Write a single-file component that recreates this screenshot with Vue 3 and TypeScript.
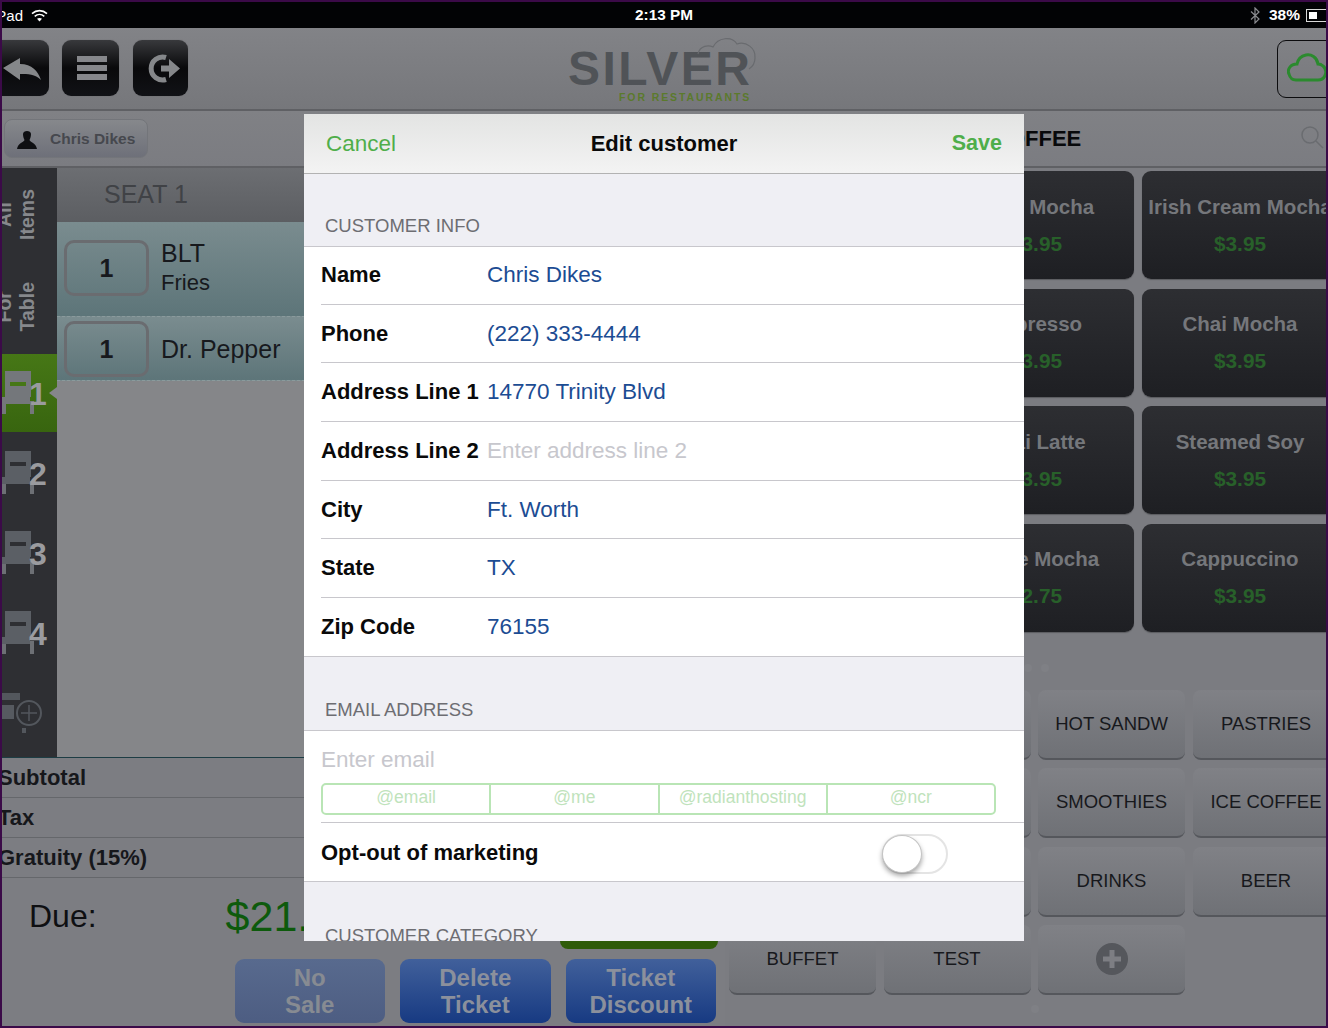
<script setup lang="ts">
const customerRows = [
  { label: 'Name', value: 'Chris Dikes' },
  { label: 'Phone', value: '(222) 333-4444' },
  { label: 'Address Line 1', value: '14770 Trinity Blvd' },
  { label: 'Address Line 2', value: '', placeholder: 'Enter address line 2' },
  { label: 'City', value: 'Ft. Worth' },
  { label: 'State', value: 'TX' },
  { label: 'Zip Code', value: '76155' }
]
const domains = ['@email', '@me', '@radianthosting', '@ncr']

const tiles = [
  { name: 'Dark Mocha', price: '$3.95' },
  { name: 'Irish Cream Mocha', price: '$3.95' },
  { name: 'Espresso', price: '$3.95' },
  { name: 'Chai Mocha', price: '$3.95' },
  { name: 'Chai Latte', price: '$3.95' },
  { name: 'Steamed Soy', price: '$3.95' },
  { name: 'White Mocha', price: '$2.75' },
  { name: 'Cappuccino', price: '$3.95' }
]
const categories = ['', '', 'HOT SANDW', 'PASTRIES', '', '', 'SMOOTHIES', 'ICE COFFEE', '', '', 'DRINKS', 'BEER', 'BUFFET', 'TEST', '+']
const seats = [1, 2, 3, 4]
const totals = ['Subtotal', 'Tax', 'Gratuity (15%)']
</script>

<template>
  <div class="screen">
    <div class="status-bar">
      <div class="status-left">
        <span class="carrier">iPad</span>
        <svg width="17" height="13" viewBox="0 0 17 13" fill="none" stroke="#fff" stroke-width="1.6">
          <path d="M1 4.6C5.5 .6 11.500 .6 16 4.6" />
          <path d="M3.700 7.300C6.500 4.900 10.500 4.900 13.300 7.300" />
          <path d="M8.500 12.500L6 9.700C7.500 8.600 9.500 8.600 11 9.700Z" fill="#fff" stroke="none" />
        </svg>
      </div>
      <span class="clock">2:13 PM</span>
      <div class="status-right">
        <svg width="10" height="17" viewBox="0 0 10 17" fill="none" stroke="#8a8b8f" stroke-width="1.200">
          <path d="M1 4.500L9 12L5 16V1L9 5L1 12.500" />
        </svg>
        <span class="battery-text">38%</span>
        <span class="battery"><i></i></span>
      </div>
    </div>

    <div class="toolbar">
      <div class="toolbar-left">
        <button class="tool back">
          <svg width="47" height="55" viewBox="0 0 47 55" fill="#85878a">
            <path d="M1 27L18 17V23C30 23 36 30 39 39C33 33 26 33 18 33V39Z" />
          </svg>
        </button>
        <button class="tool menu">
          <span></span><span></span><span></span>
        </button>
        <button class="tool out">
          <svg width="55" height="55" viewBox="0 0 55 55">
            <path d="M33 16.500A11.500 11.500 0 1 0 33 38.500" fill="none" stroke="#85878a" stroke-width="5" />
            <path d="M28 24.500H36V18L47 27.500L36 37V30.500H28Z" fill="#85878a" />
          </svg>
        </button>
      </div>
      <div class="logo">
        <svg class="logo-cloud" width="62" height="36" viewBox="0 0 62 36" fill="none" stroke="#696b6f" stroke-width="1.200">
          <path d="M2 18C4 9 13 9 17 11C22 1 36 0 41 8C50 5 60 12 59 22C59 27 56 31 53 33" />
        </svg>
        <span class="logo-name">SILVER</span>
        <span class="logo-sub">FOR RESTAURANTS</span>
      </div>
      <div class="toolbar-right">
        <button class="cloud-btn">
          <svg width="49" height="32" viewBox="0 0 49 32" fill="none" stroke="#2b8a2e" stroke-width="3">
            <path d="M9 27H31C39 27 41 17 36 13C34 11 32 11 31 11C30 4 24 1 19 2C14 3 11 6 10 11C3 11 0 17 2 21C3 25 6 27 9 27Z" />
          </svg>
        </button>
      </div>
    </div>

    <div class="subbar">
      <button class="customer-btn">
        <svg width="20" height="20" viewBox="0 0 20 20" fill="#0e0f12">
          <path d="M6 5C6 1 14 1 14 5C14 8 13 10 12.500 11C13 13 19 14 20 20H0C1 14 7 13 7.500 11C7 10 6 8 6 5Z" />
        </svg>
        <span>Chris Dikes</span>
      </button>
      <span class="menu-title">COFFEE</span>
      <svg class="search" width="24" height="24" viewBox="0 0 24 24" fill="none" stroke="#6a6c70" stroke-width="1.500">
        <circle cx="10" cy="10" r="8" />
        <path d="M16 16L23 23" />
      </svg>
    </div>

    <div class="main">
      <div class="left-panel">
        <div class="order-area">
          <div class="sidebar">
            <div class="side-text"><span>All<br />Items</span></div>
            <div class="side-text"><span>For<br />Table</span></div>
            <div v-for="seat in seats" :key="seat" class="seat" :class="{ active: seat === 1 }">
              <svg width="34" height="44" viewBox="0 0 34 44">
                <rect x="3" y="0" width="26" height="26" class="chair" />
                <rect x="8" y="11" width="16" height="4" class="slot" />
                <rect x="0" y="26" width="28" height="7" class="chair" />
                <rect x="0" y="33" width="4" height="10" class="leg" />
                <rect x="28" y="30" width="4" height="13" class="leg" />
              </svg>
              <span class="seat-no">{{ seat }}</span>
            </div>
            <div class="seat add-seat">
              <svg width="46" height="40" viewBox="0 0 46 40" fill="none" stroke="#53575d">
                <rect x="0" y="0" width="18" height="7" fill="#53575d" stroke="none" />
                <rect x="0" y="12" width="12" height="14" fill="#565a60" stroke="none" />
                <circle cx="27" cy="20" r="12" stroke-width="2" />
                <path d="M27 12V28M19 20H35" stroke-width="1.500" />
                <rect x="20" y="35" width="4" height="5" fill="#53575d" stroke="none" />
              </svg>
            </div>
          </div>
          <div class="order-list">
            <div class="seat-head">SEAT 1</div>
            <div class="order-row first">
              <div class="qty">1</div>
              <div class="order-name">
                <div>BLT</div>
                <div class="side-dish">Fries</div>
              </div>
            </div>
            <div class="order-row">
              <div class="qty">1</div>
              <div class="order-name">Dr. Pepper</div>
            </div>
          </div>
        </div>
        <div v-for="total in totals" :key="total" class="total-row">{{ total }}</div>
        <div class="due-row">
          <span class="due-label">Due:</span>
          <span class="due-amount">$21.</span>
          <span class="pay-btn"></span>
        </div>
        <div class="actions">
          <button class="action disabled">No<br />Sale</button>
          <button class="action">Delete<br />Ticket</button>
          <button class="action">Ticket<br />Discount</button>
        </div>
      </div>

      <div class="right-panel">
        <div class="tiles">
          <div v-for="tile in tiles" :key="tile.name" class="tile">
            <div class="tile-name">{{ tile.name }}</div>
            <div class="tile-price">{{ tile.price }}</div>
          </div>
        </div>
        <div class="categories">
          <div v-for="(cat, i) in categories" :key="i" class="category">
            <span v-if="cat === '+'" class="plus">
              <svg width="34" height="34" viewBox="0 0 34 34">
                <circle cx="17" cy="17" r="16" fill="#55575c" />
                <path d="M17 8V26M8 17H26" stroke="#7d7e83" stroke-width="5" />
              </svg>
            </span>
            <template v-else>{{ cat }}</template>
          </div>
        </div>
      </div>
    </div>

    <i class="dot" style="left: 1022px; top: 662px"></i>
    <i class="dot" style="left: 1039px; top: 662px"></i>
    <i class="dot" style="left: 1029px; top: 1003px"></i>

    <div class="modal">
      <div class="modal-nav">
        <span class="nav-cancel">Cancel</span>
        <span class="nav-title">Edit customer</span>
        <span class="nav-save">Save</span>
      </div>
      <div class="section-label">CUSTOMER INFO</div>
      <div class="group">
        <div v-for="row in customerRows" :key="row.label" class="form-row">
          <span class="form-label">{{ row.label }}</span>
          <span v-if="row.value" class="form-value">{{ row.value }}</span>
          <span v-else class="form-value empty">{{ row.placeholder }}</span>
        </div>
      </div>
      <div class="section-label email-label">EMAIL ADDRESS</div>
      <div class="group">
        <div class="email-row">
          <div class="email-input">Enter email</div>
          <div class="segments">
            <span v-for="d in domains" :key="d" class="segment">{{ d }}</span>
          </div>
        </div>
        <div class="opt-row">
          <span class="form-label">Opt-out of marketing</span>
          <span class="toggle"><i></i></span>
        </div>
      </div>
      <div class="section-label last">CUSTOMER CATEGORY</div>
    </div>
  </div>
</template>

<style>
html,
body {
  margin: 0;
  background: #3b0a48;
}
</style>

<style scoped>
* {
  box-sizing: border-box;
}

.screen {
  position: relative;
  width: 1324px;
  height: 1024px;
  margin: 2px;
  overflow: hidden;
  display: flex;
  flex-direction: column;
  background: #7c7d82;
  font-family: "Liberation Sans", Arial, sans-serif;
}

button {
  font-family: inherit;
  padding: 0;
  border: none;
}

.status-bar {
  height: 26px;
  flex: none;
  display: grid;
  grid-template-columns: 1fr auto 1fr;
  align-items: center;
  background: #020305;
  color: #fff;
  font-size: 15px;
}

.status-left {
  display: flex;
  align-items: center;
  gap: 8px;
  margin-left: -9px;
}

.clock {
  font-weight: bold;
  font-size: 15.300px;
}

.status-right {
  display: flex;
  align-items: center;
  justify-content: flex-end;
  font-weight: bold;
  font-size: 15.500px;
}

.battery-text {
  margin-left: 9px;
}

.battery {
  width: 22px;
  height: 13px;
  margin-left: 6px;
  margin-right: -2px;
  padding: 2px;
  border: 1px solid #d8d8d8;
}

.battery i {
  display: block;
  width: 8px;
  height: 100%;
  background: #fff;
}

.toolbar {
  height: 83px;
  flex: none;
  display: grid;
  grid-template-columns: 1fr auto 1fr;
  background: linear-gradient(#828387, #76777b);
  border-bottom: 2px solid #5f6064;
}

.toolbar-left {
  display: flex;
  gap: 13px;
  padding-top: 12px;
  margin-left: -10px;
}

.tool {
  width: 57px;
  height: 56px;
  border-radius: 9px;
  background: linear-gradient(#38393c, #09090b 50%, #111216);
  box-shadow: 0 0 1px #5c5d61;
}

.tool svg {
  display: block;
}

.back svg {
  margin-left: 10px;
}

.out {
  width: 55px;
  margin-left: 1px;
}

.menu {
  display: flex;
  flex-direction: column;
  align-items: center;
  justify-content: center;
  gap: 3px;
  padding-left: 3px;
}

.menu span {
  width: 30px;
  height: 6px;
  background: #86878b;
}

.logo {
  position: relative;
  width: 192px;
  padding-top: 18px;
}

.logo-cloud {
  position: absolute;
  right: 2px;
  top: 8px;
}

.logo-name {
  display: block;
  font-size: 48px;
  line-height: 46px;
  font-weight: bold;
  letter-spacing: 2.400px;
  color: #505357;
}

.logo-sub {
  display: block;
  margin-left: 51px;
  font-size: 10.500px;
  line-height: 11px;
  font-weight: bold;
  letter-spacing: 1.900px;
  white-space: nowrap;
  color: #5b7a2c;
}

.toolbar-right {
  display: flex;
  justify-content: flex-end;
}

.cloud-btn {
  width: 60px;
  height: 58px;
  margin-top: 12px;
  margin-right: -11px;
  background: transparent;
  border: 1px solid #0c0c0e;
  border-radius: 9px;
  text-align: left;
  padding-left: 9px;
}

.cloud-btn svg {
  display: block;
}

.subbar {
  height: 57px;
  flex: none;
  display: flex;
  align-items: center;
  background: linear-gradient(#808185, #7b7c81);
  border-bottom: 2px solid #5f6064;
}

.customer-btn {
  width: 144px;
  height: 39px;
  margin-left: 2px;
  display: flex;
  align-items: center;
  gap: 13px;
  padding-left: 12px;
  border-radius: 8px;
  border: 1px solid #73757a;
  background: linear-gradient(#86888c, #6e7079);
  color: #46484e;
  font-size: 15.500px;
  font-weight: bold;
}

.menu-title {
  margin-left: 844px;
  font-size: 22px;
  font-weight: bold;
  color: #08090b;
}

.search {
  margin-left: auto;
  transform: translate(-2px, -2px);
}

.main {
  flex: 1;
  min-height: 0;
  display: flex;
}

.left-panel {
  width: 723px;
  flex: none;
  display: flex;
  flex-direction: column;
}

.order-area {
  height: 590px;
  flex: none;
  display: flex;
  background: #858689;
  border-bottom: 1px solid #1d3d44;
}

.sidebar {
  width: 55px;
  flex: none;
  overflow: hidden;
  background: #2e2f33;
}

.side-text {
  height: 92.500px;
  display: flex;
  align-items: center;
  justify-content: flex-end;
  padding-right: 18px;
  color: #86888c;
  font-size: 19.500px;
  font-weight: bold;
  line-height: 23px;
}

.side-text span {
  writing-mode: vertical-rl;
  transform: rotate(180deg);
  text-align: center;
  white-space: nowrap;
}

.seat {
  position: relative;
  height: 80px;
  display: flex;
  align-items: center;
  color: #5b5f65;
  border-top: 1px solid transparent;
  border-bottom: 1px solid transparent;
  background-clip: padding-box;
}

.chair {
  fill: #5b5f65;
}

.leg {
  fill: #6d7075;
}

.slot {
  fill: #2e2f33;
}

.seat-no {
  margin-left: -7px;
  margin-top: 2px;
  font-size: 32px;
  font-weight: bold;
  color: #9a9b9f;
}

.seat.active {
  background-image: linear-gradient(#467716, #38650f);
}

.seat.active .chair,
.seat.active .leg {
  fill: #74777b;
}

.seat.active .slot {
  fill: #467716;
}

.seat.active::after {
  content: "";
  position: absolute;
  right: 0;
  top: 33px;
  border: 6px solid transparent;
  border-left: 0;
  border-right: 8px solid #85868a;
}

.order-list {
  flex: 1;
  min-width: 0;
}

.seat-head {
  height: 54px;
  padding: 0 0 2px 47px;
  display: flex;
  align-items: center;
  font-size: 25px;
  color: #404246;
  background: linear-gradient(#6c6e72, #5c5e62);
}

.order-row {
  height: 64px;
  padding: 4px 0 0 7px;
  display: flex;
  gap: 12px;
  align-items: flex-start;
  background: linear-gradient(#7a8c8f, #5d7579);
  border-bottom: 1px dashed #8a9a9c;
  color: #17191d;
}

.order-row.first {
  height: 95px;
  padding-top: 18px;
}

.qty {
  width: 85px;
  height: 56px;
  flex: none;
  display: flex;
  align-items: center;
  justify-content: center;
  border: 3px solid #6a6c70;
  border-radius: 10px;
  font-size: 25px;
  font-weight: bold;
}

.order-name {
  font-size: 25px;
  line-height: 56px;
}

.first .order-name {
  margin-top: -2px;
  line-height: 30px;
}

.side-dish {
  font-size: 22px;
}

.total-row {
  height: 40px;
  margin-left: -4px;
  display: flex;
  align-items: center;
  font-size: 22px;
  font-weight: bold;
  color: #16171b;
  border-bottom: 1px solid #65676b;
}

.due-row {
  height: 76px;
  flex: none;
  display: flex;
  align-items: center;
  padding-left: 27px;
}

.due-label {
  font-size: 32px;
  color: #0e0f12;
}

.due-amount {
  margin-left: 129px;
  font-size: 43px;
  color: #0d5a0c;
}

.pay-btn {
  width: 158px;
  height: 60px;
  align-self: flex-end;
  margin-left: auto;
  margin-right: 7px;
  margin-bottom: 5px;
  border-radius: 8px;
  background: #2f5c0a;
}

.actions {
  display: flex;
  justify-content: flex-end;
  gap: 15px;
  padding: 5px 9px 0 0;
}

.action {
  width: 150.500px;
  height: 64px;
  border-radius: 9px;
  background: linear-gradient(#41609b, #173a82);
  color: #8b909c;
  font-size: 24px;
  line-height: 27px;
  font-weight: bold;
}

.action.disabled {
  background: linear-gradient(#586a8e, #4d5d82);
  color: #878b92;
}

.right-panel {
  flex: 1;
  min-width: 0;
  padding: 3px 0 0 213px;
  background: #7b7c81;
}

.tiles {
  display: grid;
  grid-template-columns: 196px 196px;
  grid-auto-rows: 108px;
  gap: 9.500px 8px;
}

.tile {
  display: flex;
  flex-direction: column;
  align-items: center;
  justify-content: center;
  gap: 13px;
  border-radius: 9px;
  background: linear-gradient(#2d2e32, #1e1f23);
  line-height: 24px;
  font-weight: bold;
  white-space: nowrap;
  box-shadow: 0 1px 1px #5a5b5f;
}

.tile-name {
  font-size: 20.500px;
  color: #75777b;
}

.tile-price {
  font-size: 20.800px;
  color: #28602a;
}

.categories {
  display: grid;
  grid-template-columns: 147px 147px 147px 147px;
  grid-auto-rows: 70px;
  gap: 8.500px 7.500px;
  margin: 58px 0 0 -209px;
}

.category {
  display: flex;
  align-items: center;
  justify-content: center;
  border-radius: 8px;
  background: linear-gradient(#808186, #6f7176);
  border-bottom: 2px solid #55575c;
  font-size: 18.500px;
  color: #17181c;
  white-space: nowrap;
}

.plus {
  display: flex;
}

.dot {
  position: absolute;
  width: 8px;
  height: 8px;
  border-radius: 50%;
  background: #7f8085;
}

.modal {
  position: absolute;
  left: 302px;
  top: 112px;
  width: 720px;
  height: 827px;
  overflow: hidden;
  background: #efeff4;
}

.modal-nav {
  height: 60px;
  padding: 0 22px;
  display: grid;
  grid-template-columns: 1fr auto 1fr;
  align-items: center;
  background: linear-gradient(#e3e4e3, #f3f3f3);
  border-bottom: 1px solid #b2b2b2;
  font-size: 22px;
}

.nav-cancel {
  font-size: 22.500px;
  color: #4fae4a;
}

.nav-title {
  font-weight: bold;
  color: #0a0a0a;
}

.nav-save {
  text-align: right;
  font-size: 21.500px;
  font-weight: bold;
  color: #4fae4a;
}

.section-label {
  height: 72px;
  padding: 0 0 10px 21px;
  display: flex;
  align-items: flex-end;
  font-size: 18.500px;
  line-height: 21px;
  color: #6d6d72;
}

.section-label.email-label {
  height: 73px;
}

.section-label.last {
  height: 74px;
}

.group {
  background: #fff;
  border-top: 1px solid #c8c7cc;
  border-bottom: 1px solid #c8c7cc;
}

.form-row {
  height: 58.700px;
  margin-left: 17px;
  display: flex;
  align-items: center;
  border-bottom: 1px solid #c8c7cc;
}

.form-row:first-child {
  height: 57.700px;
}

.form-row:last-child {
  height: 57.700px;
  border-bottom: none;
}

.form-label {
  width: 166px;
  flex: none;
  font-size: 22px;
  font-weight: bold;
  color: #0a0a0a;
  white-space: nowrap;
}

.form-value {
  font-size: 22.500px;
  color: #1c4c93;
}

.form-value.empty {
  color: #c7c7cd;
}

.email-row {
  height: 92px;
  margin-left: 17px;
  padding-top: 15px;
  border-bottom: 1px solid #c8c7cc;
}

.email-input {
  height: 28px;
  line-height: 28px;
  font-size: 22.500px;
  color: #c7c7cd;
}

.segments {
  width: 675px;
  height: 32px;
  margin-top: 9px;
  display: flex;
  border: 2px solid #b9e5b5;
  border-radius: 5px;
}

.segment {
  flex: 1;
  display: flex;
  align-items: center;
  justify-content: center;
  padding-bottom: 2px;
  font-size: 17.500px;
  color: #bfe3bc;
  border-right: 2px solid #b9e5b5;
}

.segment:last-child {
  border-right: none;
}

.opt-row {
  height: 58px;
  padding: 2px 76px 0 17px;
  display: flex;
  align-items: center;
  justify-content: space-between;
}

.opt-row .form-label {
  width: auto;
}

.toggle {
  width: 66px;
  height: 40px;
  margin-top: 2px;
  border: 2px solid #e4e4e4;
  border-radius: 20px;
  background: #fff;
}

.toggle i {
  display: block;
  width: 40px;
  height: 38px;
  margin: -1px 0 0 -2px;
  border-radius: 50%;
  background: #fff;
  border: 1px solid #c4c4c4;
  box-shadow: 0 3px 5px rgba(0, 0, 0, 0.35);
}
</style>
